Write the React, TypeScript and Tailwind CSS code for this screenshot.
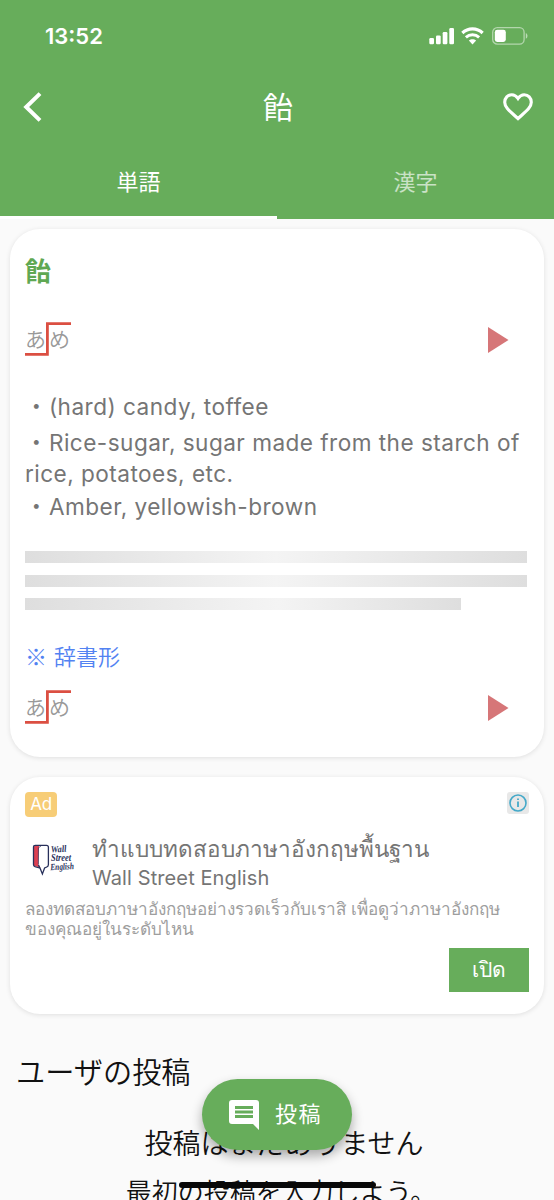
import React from "react";

function SignalIcon() {
  return (
    <svg width="26" height="18" viewBox="0 0 26 18" fill="white">
      <rect x="0.3" y="11" width="4.7" height="6.2" rx="1.2" />
      <rect x="7" y="8.4" width="4.7" height="8.8" rx="1.2" />
      <rect x="13.7" y="5" width="4.7" height="12.2" rx="1.2" />
      <rect x="20.3" y="1" width="4.7" height="16.2" rx="1.2" />
    </svg>
  );
}

function WifiIcon() {
  return (
    <svg width="23" height="18" viewBox="0 0 24 18" preserveAspectRatio="none" fill="none" stroke="white">
      <path d="M1.4 6C7.4 0.5 16.6 0.5 22.6 6" strokeWidth="3.4" />
      <path d="M5.1 10.3C9 6.8 15 6.8 18.9 10.3" strokeWidth="3.1" />
      <path d="M12 17.4L8.2 13.6C10.4 11.7 13.6 11.7 15.8 13.6Z" fill="white" stroke="none" />
    </svg>
  );
}

function BatteryIcon() {
  return (
    <svg width="36" height="18" viewBox="0 0 36 18">
      <rect x="0.7" y="0.7" width="31.4" height="16.4" rx="4.6" fill="none" stroke="white" strokeOpacity="0.5" strokeWidth="1.3" />
      <rect x="2.8" y="2.8" width="11" height="12.2" rx="2.4" fill="white" />
      <path d="M33.8 6V11.8C36 11 36 6.8 33.8 6Z" fill="white" fillOpacity="0.55" />
    </svg>
  );
}

function PitchRow() {
  return (
    <div className="flex h-[34px] items-center justify-between">
      <div className="relative flex h-[34px] w-[46px] items-center text-[21px] font-[350] leading-none text-[#999999]">
        <span className="w-[24px] shrink-0">あ</span>
        <span>め</span>
        <svg className="absolute top-0 left-0" width="46" height="34" viewBox="0 0 46 34" fill="none">
          <path d="M0 32.3H22.4V1.7H46" stroke="#db4f42" strokeWidth="2.8" />
        </svg>
      </div>
      <svg className="mt-[2px] mr-[20px]" width="21" height="26" viewBox="0 0 21 26">
        <path d="M0 0L20.5 13L0 26Z" fill="#d67678" />
      </svg>
    </div>
  );
}

function WallStreetLogo() {
  return (
    <svg className="overflow-visible" width="46" height="34" viewBox="0 0 46 34" fill="none">
      <path d="M1.5 3.5L7 2V20L9 25L1.5 22.5Z" fill="#dd4052" />
      <path d="M7 3.2L16 2.6V23.2L12.6 25.2L10.4 30L8.8 25L6.4 21.8Z" fill="white" />
      <path d="M6.4 21.5V4.8L9 3" stroke="#28305b" strokeWidth="0.7" />
      <path d="M7.5 25L3 23.7Q1.5 23.2 1.5 21.5V4.2Q1.5 2.3 3.4 2.3H14.5Q16.4 2.3 16.4 4.2V21.5Q16.4 23.3 14.8 24L12.6 25L10.4 31L8.5 26.2L6.5 22" stroke="#28305b" strokeWidth="1.3" />
      <g fill="#28305b" fontFamily="'Liberation Serif', serif" fontStyle="italic" fontWeight="700" fontSize="9.5">
        <text x="19" y="9.5" textLength="15.5" lengthAdjust="spacingAndGlyphs" transform="rotate(-3 19 9)">Wall</text>
        <text x="19" y="18" textLength="20" lengthAdjust="spacingAndGlyphs">Street</text>
        <text x="18.5" y="27.3" textLength="23.5" lengthAdjust="spacingAndGlyphs" transform="rotate(-3 19 27)">English</text>
      </g>
    </svg>
  );
}

function Header() {
  return (
    <header className="h-[219px] shrink-0 bg-[#67ad5b] text-white">
      <div className="flex h-[72px] items-center justify-between pr-[26px] pl-[45px]">
        <span className="text-[22px] font-semibold leading-none">13:52</span>
        <div className="flex items-center">
          <SignalIcon />
          <span className="ml-[6px] flex"><WifiIcon /></span>
          <span className="ml-[8px] flex"><BatteryIcon /></span>
        </div>
      </div>
      <div className="flex h-[70px] items-center justify-between pr-[21px] pl-[23px]">
        <svg width="30" height="30" viewBox="0 0 30 30" fill="none">
          <path d="M17 1.6L3.2 15L17 28.4" stroke="white" strokeWidth="4" />
        </svg>
        <span className="text-[30px] leading-none">飴</span>
        <svg width="30" height="28" viewBox="0 0 30 28" fill="none">
          <path d="M15 25.6C7 18.3 1.7 14.5 1.7 9.3C1.7 5 4.8 1.7 8.8 1.7C11.2 1.7 13.5 3.2 15 5.5C16.5 3.2 18.8 1.7 21.2 1.7C25.2 1.7 28.3 5 28.3 9.3C28.3 14.5 23 18.3 15 25.6Z" stroke="white" strokeWidth="3.1" />
        </svg>
      </div>
      <div className="grid h-[77px] grid-cols-2 text-center text-[22px]">
        <div className="flex items-center justify-center border-b-[3px] border-white pt-[6px]">単語</div>
        <div className="flex items-center justify-center pt-[3px] text-white/65">漢字</div>
      </div>
    </header>
  );
}

const card = "rounded-[30px] bg-white shadow-[0_1px_5px_rgba(0,0,0,0.11)]";

export default function App() {
  return (
    <div className="relative flex h-[1200px] w-[554px] flex-col overflow-hidden bg-[#fafafa] font-['Inter','Noto_Sans_CJK_JP',sans-serif]" lang="ja">
      <Header />

      <section className={`mx-[10px] mt-[10px] h-[528px] shrink-0 px-[15px] ${card}`}>
        <h1 className="pt-[30px] text-[26px] font-bold leading-[26px] text-[#5fa853]">飴</h1>
        <div className="mt-[37px]"><PitchRow /></div>
        <div className="mt-[35px] text-[22.6px] tracking-[0.46px] whitespace-nowrap text-[#757575]">
          <p className="h-[36px] leading-[31px]"><span className="tracking-[1.3px]">・</span>(hard) candy, toffee</p>
          <p className="h-[31px] leading-[31px]"><span className="tracking-[1.3px]">・</span>Rice-sugar, sugar made from the starch of</p>
          <p className="h-[33px] leading-[31px]">rice, potatoes, etc.</p>
          <p className="h-[32px] leading-[31px]"><span className="tracking-[1.3px]">・</span>Amber, yellowish-brown</p>
        </div>
        <div className="mt-[28px] flex flex-col gap-[11.7px]">
          <div className="h-[12px] w-[502px] bg-linear-to-r from-[#dedede] via-[#f4f4f4] to-[#dedede]" />
          <div className="h-[12px] w-[502px] bg-linear-to-r from-[#dedede] via-[#f4f4f4] to-[#dedede]" />
          <div className="h-[12px] w-[436px] bg-linear-to-r from-[#dedede] via-[#f4f4f4] via-58% to-[#dedede]" />
        </div>
        <p className="mt-[34px] h-[22px] font-['Noto_Sans_CJK_JP',sans-serif] text-[22px] leading-[22px] font-[350] text-[#5282f2]">※<span className="ml-[7px]">辞書形</span></p>
        <div className="mt-[24px]"><PitchRow /></div>
      </section>

      <section className={`mx-[10px] mt-[20px] h-[237px] shrink-0 px-[15px] ${card}`}>
        <div className="flex items-start justify-between pt-[15px]">
          <span className="flex h-[25px] w-[32px] items-center justify-center rounded-[4px] bg-[#f7cd77] text-[17px] tracking-[-0.4px] text-white">Ad</span>
          <span className="flex size-[22px] items-center justify-center rounded-[3px] bg-[#e8e8e8]">
            <svg width="18" height="18" viewBox="0 0 18 18" fill="none" stroke="#44a9c9">
              <circle cx="9" cy="9" r="8" strokeWidth="1.6" />
              <path d="M9 7.6V13M9 4.4V6.1" strokeWidth="1.8" />
            </svg>
          </span>
        </div>
        <div className="mt-[16px] flex h-[62px]">
          <div className="w-[67px] pt-[10px] pl-[7px]"><WallStreetLogo /></div>
          <div className="whitespace-nowrap text-[#757575]">
            <p className="h-[33px] text-[22.5px] font-medium leading-[31px]">ทำแบบทดสอบภาษาอังกฤษพื้นฐาน</p>
            <p className="text-[20px] leading-[24px] tracking-[0.1px]">Wall Street English</p>
          </div>
        </div>
        <p className="mt-[4px] text-[17.1px] leading-[20px] whitespace-nowrap text-[#9e9e9e]">
          ลองทดสอบภาษาอังกฤษอย่างรวดเร็วกับเราสิ เพื่อดูว่าภาษาอังกฤษ<br />ของคุณอยู่ในระดับไหน
        </p>
        <div className="mt-[9px] flex justify-end">
          <button className="h-[44px] w-[80px] bg-[#67ad5b] text-[21px] leading-[44px] text-white">เปิด</button>
        </div>
      </section>

      <section className="text-[#111111]">
        <h2 className="mt-[38px] ml-[16px] text-[29.2px] font-[350] leading-[42px]">ユーザの投稿</h2>
        <div className="mt-[26px] text-center text-[28px] font-[350] whitespace-nowrap">
          <p className="pl-[14px] leading-[49px]">投稿はまだありません</p>
          <p className="pl-[8px] text-[26px] leading-[47px]">最初の投稿を入力しよう。</p>
        </div>
      </section>

      <button className="absolute top-[1079px] left-[202px] flex h-[71px] w-[150px] items-center rounded-full bg-[#67ad5b] pl-[27px] text-[22px] tracking-[1.5px] text-white shadow-[0_6px_12px_rgba(0,0,0,0.32)]">
        <svg width="30" height="30" viewBox="0 0 30 30" fill="white">
          <path fillRule="evenodd" d="M3 0H27A3 3 0 0 1 30 3V30L24 24H3A3 3 0 0 1 0 21V3A3 3 0 0 1 3 0ZM6 6V9H24V6ZM6 10.5V13.5H24V10.5ZM6 15V18H24V15Z" />
        </svg>
        <span className="ml-[16px]">投稿</span>
      </button>
      <div className="absolute top-[1182px] left-[179px] h-[6px] w-[197px] rounded-full bg-[#080808]" />
    </div>
  );
}
